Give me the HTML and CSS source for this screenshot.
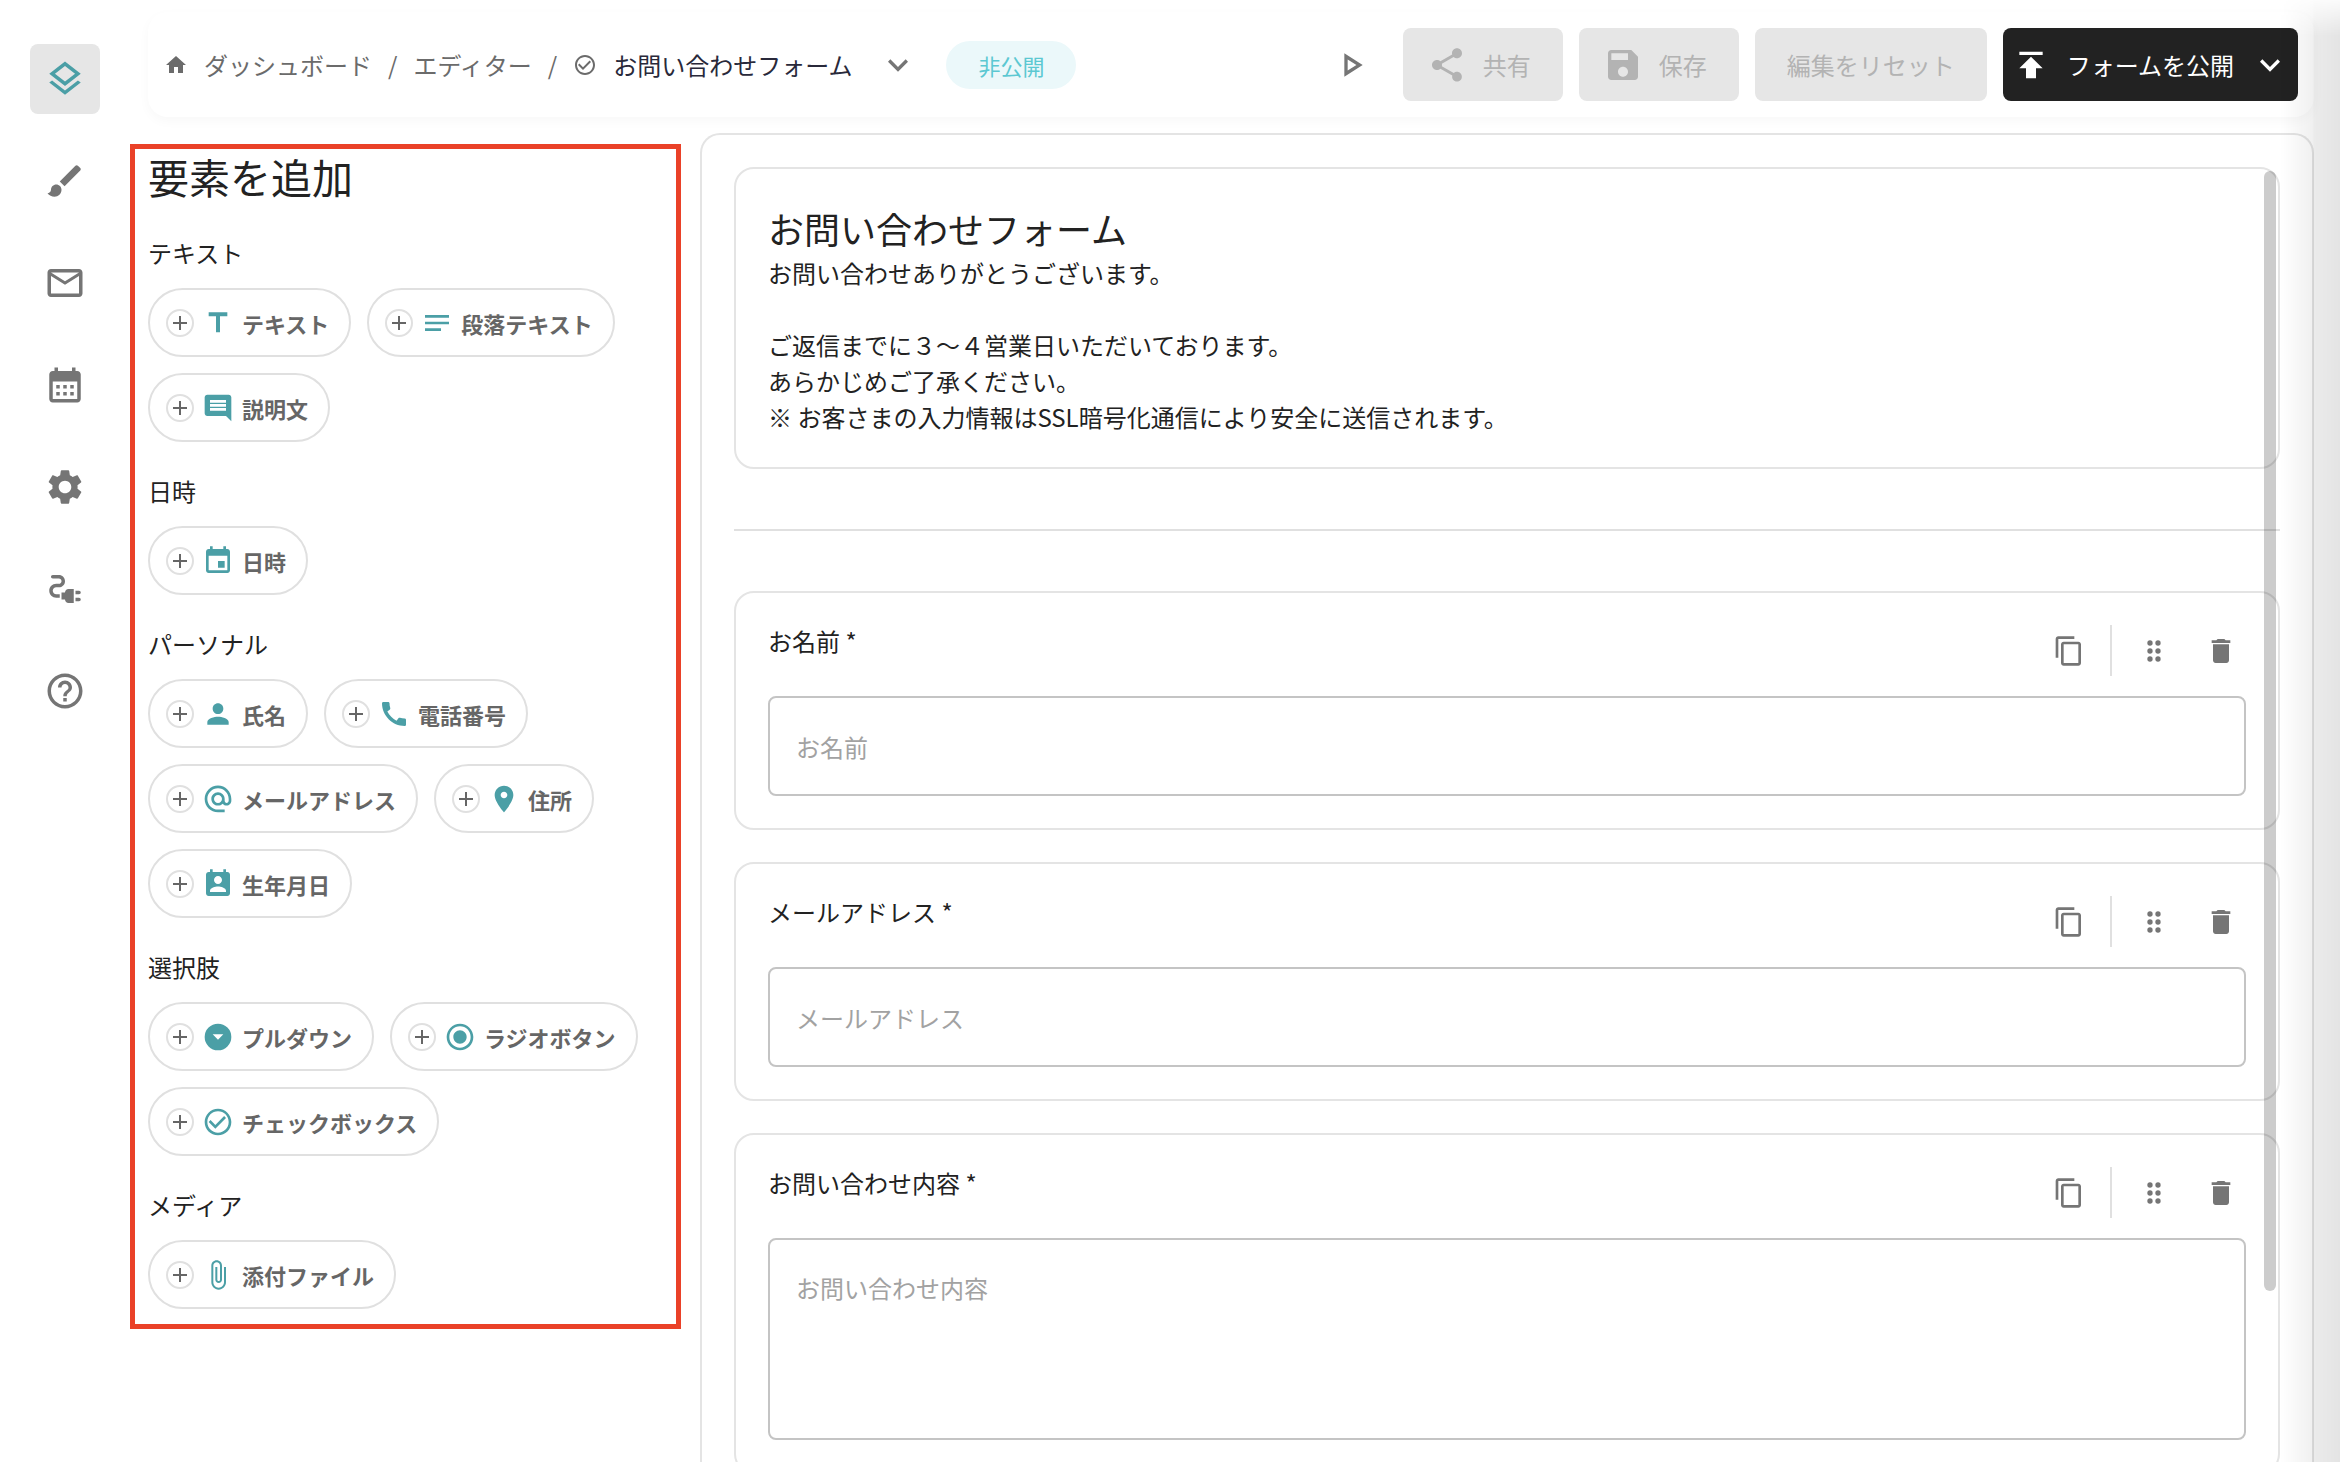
FILE: index.html
```html
<!DOCTYPE html>
<html lang="ja">
<head>
<meta charset="utf-8">
<meta name="viewport" content="width=device-width, initial-scale=1">
<title>お問い合わせフォーム</title>
<link rel="stylesheet" href="styles.css">
</head>
<body>
<svg class="sprite" aria-hidden="true">
  <symbol id="layers" viewBox="0 0 24 24"><path d="M11.990 18.540l-7.370-5.730L3 14.070l9 7 9-7-1.630-1.270-7.380 5.740zM12 16l7.360-5.730L21 9l-9-7-9 7 1.630 1.270L12 16zm0-11.470L17.740 9 12 13.470 6.260 9 12 4.530z"/></symbol>
  <symbol id="brush" viewBox="0 0 24 24"><path d="M7 14c-1.660 0-3 1.340-3 3 0 1.310-1.160 2-2 2 .92 1.220 2.490 2 4 2 2.210 0 4-1.790 4-4 0-1.660-1.340-3-3-3zm13.710-9.370-1.340-1.340c-.39-.39-1.020-.39-1.410 0L9 12.250 11.750 15l8.960-8.960c.39-.39.39-1.020 0-1.410z"/></symbol>
  <symbol id="mail" viewBox="0 0 24 24"><path d="M22 6c0-1.100-.9-2-2-2H4c-1.100 0-2 .9-2 2v12c0 1.100.9 2 2 2h16c1.100 0 2-.9 2-2V6zm-2 0-8 5-8-5h16zm0 12H4V8l8 5 8-5v10z"/></symbol>
  <symbol id="calendar" viewBox="0 0 24 24"><path d="M19 4h-1V2h-2v2H8V2H6v2H5c-1.110 0-1.990.9-1.990 2L3 20c0 1.100.89 2 2 2h14c1.100 0 2-.9 2-2V6c0-1.100-.9-2-2-2zm0 16H5V10h14v10zM9 14H7v-2h2v2zm4 0h-2v-2h2v2zm4 0h-2v-2h2v2zm-8 4H7v-2h2v2zm4 0h-2v-2h2v2zm4 0h-2v-2h2v2z"/></symbol>
  <symbol id="gear" viewBox="0 0 24 24"><path d="M19.140 12.940c.04-.3.060-.61.060-.94 0-.32-.02-.64-.07-.94l2.030-1.580c.18-.14.230-.41.120-.61l-1.920-3.320c-.12-.22-.37-.29-.59-.22l-2.390.96c-.5-.38-1.030-.7-1.620-.94l-.36-2.540c-.04-.24-.24-.41-.48-.41h-3.840c-.24 0-.43.170-.47.410l-.36 2.540c-.59.240-1.130.570-1.620.940l-2.390-.96c-.22-.08-.47 0-.59.220L2.740 8.870c-.12.210-.08.470.120.610l2.030 1.580c-.05.300-.09.630-.09.940s.02.640.070.940l-2.030 1.580c-.18.140-.23.410-.12.610l1.920 3.320c.12.220.37.290.59.220l2.390-.96c.5.380 1.030.7 1.620.940l.36 2.540c.05.240.24.410.48.410h3.840c.24 0 .44-.17.470-.41l.36-2.540c.59-.24 1.130-.56 1.620-.94l2.390.96c.22.080.47 0 .59-.22l1.920-3.320c.12-.22.070-.47-.12-.61l-2.010-1.580zM12 15.600c-1.980 0-3.600-1.620-3.600-3.600s1.620-3.600 3.600-3.600 3.600 1.620 3.600 3.600-1.620 3.600-3.600 3.600z"/></symbol>
  <symbol id="plug" viewBox="0 0 24 24"><path d="M21 14c0-.55-.45-1-1-1h-2v2h2c.55 0 1-.45 1-1zM20 17h-2v2h2c.55 0 1-.45 1-1s-.45-1-1-1zM12 14h-2v4h2c0 1.100.9 2 2 2h3v-8h-3c-1.100 0-2 .9-2 2z"/><path d="M5 13c0-1.100.9-2 2-2h1.500c1.930 0 3.500-1.570 3.500-3.500S10.430 4 8.500 4H5c-.55 0-1 .45-1 1s.45 1 1 1h3.500c.83 0 1.500.67 1.500 1.500S9.330 9 8.500 9H7c-2.210 0-4 1.790-4 4s1.790 4 4 4h2v-2H7c-1.100 0-2-.9-2-2z"/></symbol>
  <symbol id="help" viewBox="0 0 24 24"><path d="M11 18h2v-2h-2v2zm1-16C6.480 2 2 6.480 2 12s4.480 10 10 10 10-4.480 10-10S17.520 2 12 2zm0 18c-4.410 0-8-3.590-8-8s3.590-8 8-8 8 3.590 8 8-3.590 8-8 8zm0-14c-2.210 0-4 1.790-4 4h2c0-1.100.9-2 2-2s2 .9 2 2c0 2-3 1.750-3 5h2c0-2.250 3-2.500 3-5 0-2.210-1.790-4-4-4z"/></symbol>
  <symbol id="home" viewBox="0 0 24 24"><path d="M10 20v-6h4v6h5v-8h3L12 3 2 12h3v8z"/></symbol>
  <symbol id="check" viewBox="0 0 24 24"><path d="M16.590 7.580 10 14.170l-3.590-3.580L5 12l5 5 8-8zM12 2C6.480 2 2 6.480 2 12s4.480 10 10 10 10-4.480 10-10S17.520 2 12 2zm0 18c-4.420 0-8-3.580-8-8s3.580-8 8-8 8 3.580 8 8-3.580 8-8 8z"/></symbol>
  <symbol id="chevron" viewBox="0 0 24 24"><path d="M16.590 8.590 12 13.170 7.410 8.590 6 10l6 6 6-6z"/></symbol>
  <symbol id="play" viewBox="0 0 24 24"><path d="M10 8.640 15.270 12 10 15.360V8.640M8 5v14l11-7L8 5z"/></symbol>
  <symbol id="share" viewBox="0 0 24 24"><path d="M18 16.080c-.76 0-1.440.3-1.960.77L8.910 12.700c.05-.23.090-.46.090-.7s-.04-.47-.09-.7l7.050-4.110c.54.500 1.250.81 2.040.81 1.660 0 3-1.340 3-3s-1.340-3-3-3-3 1.340-3 3c0 .24.040.47.090.7L8.040 9.810C7.500 9.310 6.790 9 6 9c-1.660 0-3 1.340-3 3s1.340 3 3 3c.79 0 1.500-.31 2.040-.81l7.120 4.160c-.05.210-.08.430-.08.650 0 1.610 1.310 2.920 2.920 2.920s2.920-1.310 2.920-2.920-1.310-2.920-2.920-2.920z"/></symbol>
  <symbol id="save" viewBox="0 0 24 24"><path d="M17 3H5c-1.110 0-2 .9-2 2v14c0 1.100.89 2 2 2h14c1.100 0 2-.9 2-2V7l-4-4zm-5 16c-1.660 0-3-1.340-3-3s1.340-3 3-3 3 1.340 3 3-1.340 3-3 3zm3-10H5V5h10v4z"/></symbol>
  <symbol id="publish" viewBox="0 0 24 24"><path d="M5 4v2h14V4H5zm0 10h4v6h6v-6h4l-7-7-7 7z"/></symbol>
  <symbol id="plus" viewBox="0 0 14 14"><path d="M7 0v14M0 7h14" fill="none" stroke="currentColor" stroke-width="2"/></symbol>
  <symbol id="title" viewBox="0 0 24 24"><path d="M5 4v3h5.500v12h3V7H19V4z"/></symbol>
  <symbol id="lines" viewBox="0 0 24 24"><path d="M3 18h12v-2H3v2zM3 6v2h18V6H3zm0 7h18v-2H3v2z"/></symbol>
  <symbol id="comment" viewBox="0 0 24 24"><path d="M21.990 4c0-1.100-.89-2-1.990-2H4c-1.100 0-2 .9-2 2v12c0 1.100.9 2 2 2h14l4 4-.01-18zM18 14H6v-2h12v2zm0-3H6V9h12v2zm0-3H6V6h12v2z"/></symbol>
  <symbol id="event" viewBox="0 0 24 24"><path d="M17 12h-5v5h5v-5zM16 1v2H8V1H6v2H5c-1.110 0-1.990.9-1.990 2L3 19c0 1.100.89 2 2 2h14c1.100 0 2-.9 2-2V5c0-1.100-.9-2-2-2h-1V1h-2zm3 18H5V8h14v11z"/></symbol>
  <symbol id="person" viewBox="0 0 24 24"><path d="M12 12c2.210 0 4-1.790 4-4s-1.790-4-4-4-4 1.790-4 4 1.790 4 4 4zm0 2c-2.670 0-8 1.340-8 4v2h16v-2c0-2.660-5.330-4-8-4z"/></symbol>
  <symbol id="phone" viewBox="0 0 24 24"><path d="M20.010 15.380c-1.230 0-2.420-.2-3.530-.56-.35-.12-.74-.03-1.010.24l-1.570 1.970c-2.830-1.350-5.480-3.900-6.890-6.830l1.950-1.660c.27-.28.350-.67.240-1.020-.37-1.110-.56-2.300-.56-3.530 0-.54-.45-.99-.99-.99H4.190C3.650 3 3 3.240 3 3.990 3 13.280 10.730 21 20.010 21c.71 0 .99-.63.990-1.180v-3.450c0-.54-.45-.99-.99-.99z"/></symbol>
  <symbol id="at" viewBox="0 0 24 24"><path d="M12 1.950c-5.520 0-10 4.480-10 10s4.480 10 10 10h5v-2h-5c-4.340 0-8-3.660-8-8s3.660-8 8-8 8 3.660 8 8v1.430c0 .79-.71 1.570-1.500 1.570s-1.500-.78-1.500-1.570v-1.430c0-2.760-2.240-5-5-5s-5 2.240-5 5 2.240 5 5 5c1.380 0 2.640-.56 3.540-1.470.65.890 1.770 1.470 2.960 1.470 1.970 0 3.500-1.600 3.500-3.570v-1.430c0-5.520-4.480-10-10-10zm0 13c-1.660 0-3-1.340-3-3s1.340-3 3-3 3 1.340 3 3-1.340 3-3 3z"/></symbol>
  <symbol id="place" viewBox="0 0 24 24"><path d="M12 2C8.130 2 5 5.130 5 9c0 5.250 7 13 7 13s7-7.750 7-13c0-3.870-3.130-7-7-7zm0 9.500c-1.380 0-2.500-1.120-2.500-2.500s1.120-2.500 2.500-2.500 2.500 1.120 2.500 2.500-1.120 2.500-2.500 2.500z"/></symbol>
  <symbol id="birthday" viewBox="0 0 24 24"><path d="M19 3h-1V1h-2v2H8V1H6v2H5c-1.110 0-2 .9-2 2v14c0 1.100.89 2 2 2h14c1.100 0 2-.9 2-2V5c0-1.100-.9-2-2-2zm-7 3c1.660 0 3 1.340 3 3s-1.340 3-3 3-3-1.340-3-3 1.340-3 3-3zm6 12H6v-1c0-2 4-3.100 6-3.100s6 1.100 6 3.100v1z"/></symbol>
  <symbol id="dropdown" viewBox="0 0 24 24"><path fill-rule="evenodd" d="M12 2a10 10 0 1 0 0 20 10 10 0 0 0 0-20zM8 10h8l-4 4z"/></symbol>
  <symbol id="radio" viewBox="0 0 24 24"><path d="M12 7c-2.760 0-5 2.240-5 5s2.240 5 5 5 5-2.240 5-5-2.240-5-5-5zm0-5C6.480 2 2 6.480 2 12s4.480 10 10 10 10-4.480 10-10S17.520 2 12 2zm0 18c-4.420 0-8-3.580-8-8s3.580-8 8-8 8 3.580 8 8-3.580 8-8 8z"/></symbol>
  <symbol id="clip" viewBox="0 0 24 24"><path d="M16.500 6v11.500c0 2.210-1.790 4-4 4s-4-1.790-4-4V5c0-1.380 1.120-2.500 2.500-2.500s2.500 1.120 2.500 2.500v10.500c0 .55-.45 1-1 1s-1-.45-1-1V6H10v9.500c0 1.380 1.120 2.500 2.500 2.500s2.500-1.120 2.500-2.500V5c0-2.210-1.790-4-4-4S7 2.790 7 5v12.500c0 3.040 2.460 5.500 5.500 5.500s5.500-2.460 5.500-5.500V6h-1.500z"/></symbol>
  <symbol id="copy" viewBox="0 0 24 24"><path d="M16 1H4c-1.100 0-2 .9-2 2v14h2V3h12V1zm3 4H8c-1.100 0-2 .9-2 2v14c0 1.100.9 2 2 2h11c1.100 0 2-.9 2-2V7c0-1.100-.9-2-2-2zm0 16H8V7h11v14z"/></symbol>
  <symbol id="drag" viewBox="0 0 24 24"><circle cx="9" cy="6" r="2"/><circle cx="15" cy="6" r="2"/><circle cx="9" cy="12" r="2"/><circle cx="15" cy="12" r="2"/><circle cx="9" cy="18" r="2"/><circle cx="15" cy="18" r="2"/></symbol>
  <symbol id="trash" viewBox="0 0 24 24"><path d="M6 19c0 1.100.9 2 2 2h8c1.100 0 2-.9 2-2V7H6v12zM19 4h-3.500l-1-1h-5l-1 1H5v2h14V4z"/></symbol>
</svg>

<div class="app">
  <nav class="rail" aria-label="メニュー">
    <button class="rail-button is-active" type="button" aria-label="要素"><svg><use href="#layers"/></svg></button>
    <button class="rail-button" type="button" aria-label="デザイン"><svg><use href="#brush"/></svg></button>
    <button class="rail-button" type="button" aria-label="メール"><svg><use href="#mail"/></svg></button>
    <button class="rail-button" type="button" aria-label="カレンダー"><svg><use href="#calendar"/></svg></button>
    <button class="rail-button" type="button" aria-label="設定"><svg><use href="#gear"/></svg></button>
    <button class="rail-button" type="button" aria-label="連携"><svg><use href="#plug"/></svg></button>
    <button class="rail-button" type="button" aria-label="ヘルプ"><svg><use href="#help"/></svg></button>
  </nav>

  <div class="workspace">
    <header class="topbar">
      <nav class="breadcrumb" aria-label="パンくず">
        <svg class="crumb-icon"><use href="#home"/></svg>
        <a href="#dashboard">ダッシュボード</a>
        <span>/</span>
        <a href="#editor">エディター</a>
        <span>/</span>
        <svg class="crumb-icon"><use href="#check"/></svg>
        <a class="current" href="#form" aria-current="page">お問い合わせフォーム</a>
      </nav>
      <button class="plain-button form-switch" type="button" aria-label="フォームを切り替え"><svg><use href="#chevron"/></svg></button>
      <span class="status">非公開</span>
      <div class="actions">
        <button class="plain-button preview" type="button" aria-label="プレビュー"><svg><use href="#play"/></svg></button>
        <button class="action with-icon" type="button" disabled><svg><use href="#share"/></svg>共有</button>
        <button class="action with-icon" type="button" disabled><svg><use href="#save"/></svg>保存</button>
        <button class="action" type="button" disabled>編集をリセット</button>
        <button class="action publish" type="button"><svg><use href="#publish"/></svg>フォームを公開<svg><use href="#chevron"/></svg></button>
      </div>
    </header>

    <div class="columns">
      <aside class="elements">
        <h1>要素を追加</h1>
        <section>
          <h2>テキスト</h2>
          <div class="chips">
            <button class="chip" type="button"><span class="add"><svg><use href="#plus"/></svg></span><svg class="kind"><use href="#title"/></svg>テキスト</button>
            <button class="chip" type="button"><span class="add"><svg><use href="#plus"/></svg></span><svg class="kind"><use href="#lines"/></svg>段落テキスト</button>
            <button class="chip" type="button"><span class="add"><svg><use href="#plus"/></svg></span><svg class="kind"><use href="#comment"/></svg>説明文</button>
          </div>
        </section>
        <section>
          <h2>日時</h2>
          <div class="chips">
            <button class="chip" type="button"><span class="add"><svg><use href="#plus"/></svg></span><svg class="kind"><use href="#event"/></svg>日時</button>
          </div>
        </section>
        <section>
          <h2>パーソナル</h2>
          <div class="chips">
            <button class="chip" type="button"><span class="add"><svg><use href="#plus"/></svg></span><svg class="kind"><use href="#person"/></svg>氏名</button>
            <button class="chip" type="button"><span class="add"><svg><use href="#plus"/></svg></span><svg class="kind"><use href="#phone"/></svg>電話番号</button>
            <button class="chip" type="button"><span class="add"><svg><use href="#plus"/></svg></span><svg class="kind"><use href="#at"/></svg>メールアドレス</button>
            <button class="chip" type="button"><span class="add"><svg><use href="#plus"/></svg></span><svg class="kind"><use href="#place"/></svg>住所</button>
            <button class="chip" type="button"><span class="add"><svg><use href="#plus"/></svg></span><svg class="kind"><use href="#birthday"/></svg>生年月日</button>
          </div>
        </section>
        <section>
          <h2>選択肢</h2>
          <div class="chips">
            <button class="chip" type="button"><span class="add"><svg><use href="#plus"/></svg></span><svg class="kind"><use href="#dropdown"/></svg>プルダウン</button>
            <button class="chip" type="button"><span class="add"><svg><use href="#plus"/></svg></span><svg class="kind"><use href="#radio"/></svg>ラジオボタン</button>
            <button class="chip" type="button"><span class="add"><svg><use href="#plus"/></svg></span><svg class="kind"><use href="#check"/></svg>チェックボックス</button>
          </div>
        </section>
        <section>
          <h2>メディア</h2>
          <div class="chips">
            <button class="chip" type="button"><span class="add"><svg><use href="#plus"/></svg></span><svg class="kind"><use href="#clip"/></svg>添付ファイル</button>
          </div>
        </section>
      </aside>

      <main class="canvas">
        <section class="card intro">
          <h2>お問い合わせフォーム</h2>
          <p>お問い合わせありがとうございます。<br><br>ご返信までに３〜４営業日いただいております。<br>あらかじめご了承ください。<br>※ お客さまの入力情報はSSL暗号化通信により安全に送信されます。</p>
        </section>
        <hr>
        <div class="fields">
          <section class="card">
            <div class="card-head">
              <label for="name">お名前 *</label>
              <div class="tools">
                <button class="tool" type="button" aria-label="複製"><svg><use href="#copy"/></svg></button>
                <span class="rule"></span>
                <button class="tool" type="button" aria-label="移動"><svg><use href="#drag"/></svg></button>
                <button class="tool" type="button" aria-label="削除"><svg><use href="#trash"/></svg></button>
              </div>
            </div>
            <input class="field" id="name" type="text" placeholder="お名前">
          </section>
          <section class="card">
            <div class="card-head">
              <label for="email">メールアドレス *</label>
              <div class="tools">
                <button class="tool" type="button" aria-label="複製"><svg><use href="#copy"/></svg></button>
                <span class="rule"></span>
                <button class="tool" type="button" aria-label="移動"><svg><use href="#drag"/></svg></button>
                <button class="tool" type="button" aria-label="削除"><svg><use href="#trash"/></svg></button>
              </div>
            </div>
            <input class="field" id="email" type="email" placeholder="メールアドレス">
          </section>
          <section class="card">
            <div class="card-head">
              <label for="message">お問い合わせ内容 *</label>
              <div class="tools">
                <button class="tool" type="button" aria-label="複製"><svg><use href="#copy"/></svg></button>
                <span class="rule"></span>
                <button class="tool" type="button" aria-label="移動"><svg><use href="#drag"/></svg></button>
                <button class="tool" type="button" aria-label="削除"><svg><use href="#trash"/></svg></button>
              </div>
            </div>
            <textarea class="field area" id="message" placeholder="お問い合わせ内容"></textarea>
          </section>
        </div>
        <div class="scroll-thumb"></div>
      </main>
    </div>
  </div>
  <div class="edge-shade"></div>
</div>
</body>
</html>
```

FILE: styles.css
```css
* {
  box-sizing: border-box;
}

body {
  margin: 0;
  background: #fff;
  color: #222;
  font-family: "Noto Sans CJK JP", sans-serif;
  font-size: 24px;
  line-height: 36px;
}

h1,
h2,
p {
  margin: 0;
  font-weight: 400;
}

button,
input,
textarea {
  font: inherit;
  color: inherit;
}

button {
  display: flex;
  align-items: center;
  justify-content: center;
  margin: 0;
  padding: 0;
  border: 0;
  background: none;
  white-space: nowrap;
}

svg {
  display: block;
  flex: none;
  fill: currentColor;
}

.sprite {
  position: absolute;
  width: 0;
  height: 0;
}

.app {
  position: relative;
  display: flex;
  height: 100vh;
  overflow: hidden;
}

/* Icon rail */
.rail {
  display: flex;
  flex: none;
  flex-direction: column;
  gap: 32px;
  padding: 44px 30px;
}

.rail-button {
  width: 70px;
  height: 70px;
  border-radius: 8px;
  color: #757575;
}

.rail-button svg {
  width: 42px;
  height: 42px;
}

.rail-button.is-active {
  background: #e6e6e6;
  color: #4b9fa6;
}

.workspace {
  display: flex;
  flex: 1;
  flex-direction: column;
  gap: 16px;
  min-width: 0;
  padding: 12px 26px 0 0;
}

/* Top bar */
.topbar {
  display: flex;
  align-items: center;
  margin-left: 18px;
  padding: 16px;
  border-radius: 20px;
  box-shadow: 0 4px 12px rgba(0, 0, 0, .03);
}

.breadcrumb {
  display: flex;
  align-items: center;
  gap: 16px;
  color: #6b6b6b;
  white-space: nowrap;
}

.breadcrumb a {
  color: inherit;
  text-decoration: none;
}

.breadcrumb .current {
  color: #29293a;
}

.crumb-icon {
  width: 24px;
  height: 24px;
}

.plain-button {
  color: #757575;
}

.plain-button svg,
.action svg {
  width: 40px;
  height: 40px;
}

.form-switch {
  margin: 0 28px 0 26px;
}

.status {
  padding: 6px 32px;
  border-radius: 24px;
  background: #ebf8fa;
  color: #5cc8d2;
  font-size: 22px;
}

.actions {
  display: flex;
  align-items: center;
  gap: 16px;
  margin-left: auto;
}

.preview {
  margin-right: 16px;
}

.action {
  gap: 16px;
  height: 73px;
  padding: 0 32px;
  border-radius: 8px;
  background: #e6e6e6;
  color: #b3b3b3;
}

.with-icon {
  padding-left: 24px;
}

.publish {
  padding: 0 8px;
  background: #222;
  color: #fff;
}

.columns {
  display: flex;
  flex: 1;
  gap: 19px;
  min-height: 0;
}

/* Element palette */
.elements {
  flex: none;
  align-self: flex-start;
  width: 551px;
  margin-top: 11px;
  padding: 0 13px 15px;
  border: 5px solid #ea4128;
}

.elements h1 {
  margin-bottom: 32px;
  font-size: 41px;
  line-height: 54px;
}

.elements section + section {
  margin-top: 31px;
}

.elements h2 {
  margin-bottom: 17px;
  font-size: 24px;
}

.chips {
  display: flex;
  flex-wrap: wrap;
  gap: 16px;
}

.chip {
  gap: 8px;
  height: 69px;
  padding: 0 20px 0 16px;
  border: 2px solid #e0e0e0;
  border-radius: 35px;
  color: #666;
  font-size: 22px;
  font-weight: 700;
}

.add {
  display: flex;
  align-items: center;
  justify-content: center;
  width: 28px;
  height: 28px;
  border: 2px solid #e0e0e0;
  border-radius: 50%;
}

.add svg {
  width: 14px;
  height: 14px;
}

.kind {
  width: 32px;
  height: 32px;
  color: #4b9fa6;
}

/* Form canvas */
.canvas {
  position: relative;
  flex: 1;
  min-width: 0;
  padding: 32px 32px 0;
  border: 2px solid #e4e4e4;
  border-bottom: 0;
  border-radius: 20px 20px 0 0;
}

.card {
  padding: 32px;
  border: 2px solid #e4e4e4;
  border-radius: 20px;
}

.intro h2 {
  font-size: 36px;
  line-height: 54px;
}

.canvas hr {
  height: 2px;
  margin: 60px 0;
  border: 0;
  background: #e0e0e0;
}

.fields {
  display: flex;
  flex-direction: column;
  gap: 32px;
}

.card-head {
  display: flex;
  justify-content: space-between;
  margin-bottom: 20px;
  line-height: 32px;
}

.tools {
  display: flex;
  gap: 16px;
  color: #757575;
}

.tool {
  width: 51px;
  height: 51px;
}

.tool svg {
  width: 32px;
  height: 32px;
}

.rule {
  width: 2px;
  background: #e0e0e0;
}

.field {
  display: block;
  width: 100%;
  height: 100px;
  padding: 30px 26px;
  border: 2px solid #c4c4c4;
  border-radius: 8px;
  background: transparent;
  resize: none;
}

.field::placeholder {
  color: #a2a2a2;
}

.area {
  height: 202px;
}

.scroll-thumb {
  position: absolute;
  top: 36px;
  right: 36px;
  width: 12px;
  height: 1120px;
  border-radius: 6px;
  background: rgba(0, 0, 0, .2);
}

.edge-shade {
  position: absolute;
  top: 0;
  right: 0;
  bottom: 0;
  width: 60px;
  background: linear-gradient(to right, rgba(0, 0, 0, 0), rgba(0, 0, 0, .02) 12px, rgba(0, 0, 0, .06) 33px, rgba(0, 0, 0, .08) 34px, rgba(0, 0, 0, .105) 60px);
  mask-image: linear-gradient(to bottom, rgba(0, 0, 0, .15), #000 36px);
  pointer-events: none;
}
```
